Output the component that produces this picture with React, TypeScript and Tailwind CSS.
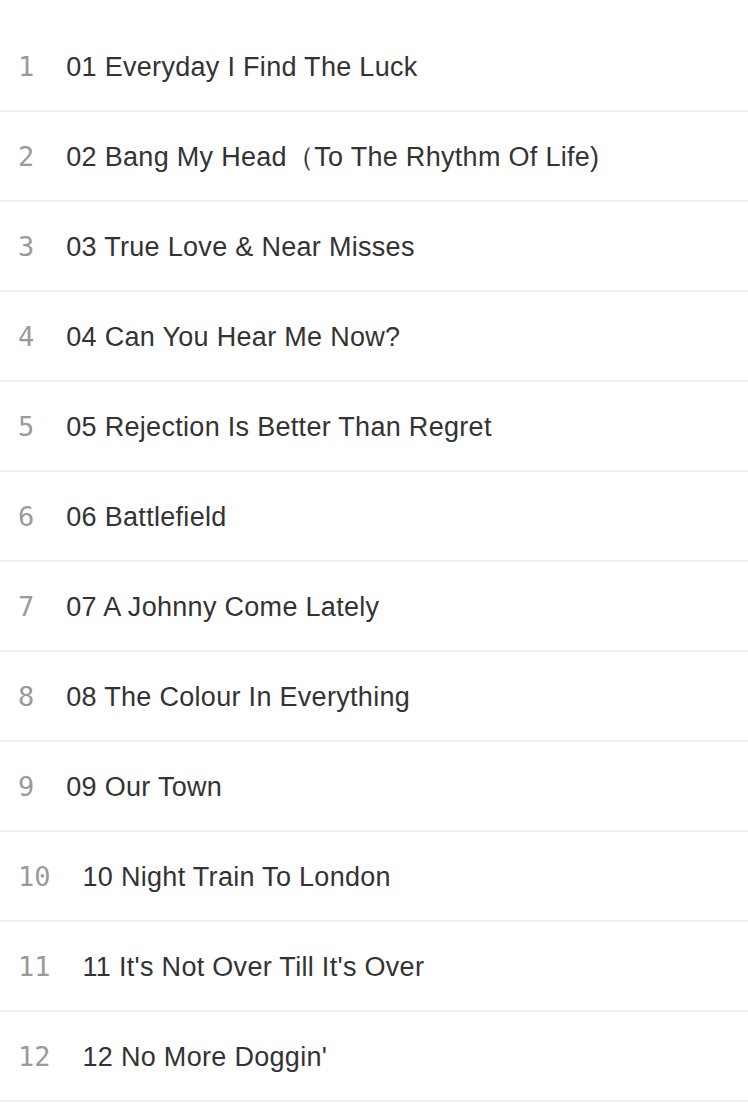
const tracks = [
  '01 Everyday I Find The Luck',
  '02 Bang My Head（To The Rhythm Of Life)',
  '03 True Love & Near Misses',
  '04 Can You Hear Me Now?',
  '05 Rejection Is Better Than Regret',
  '06 Battlefield',
  '07 A Johnny Come Lately',
  '08 The Colour In Everything',
  '09 Our Town',
  '10 Night Train To London',
  "11 It's Not Over Till It's Over",
  "12 No More Doggin'",
];

export default function App() {
  return (
    <div className="min-h-[1104px] bg-white pt-[22px]">
      <ul>
        {tracks.map((title, i) => (
          <li
            key={i}
            className="flex h-[90px] items-center border-b-2 border-[#f0f0f0] pt-[2px] pl-[18px]"
          >
            <span className="mr-[32px] font-['DejaVu_Sans_Mono',monospace] text-[27px] font-light text-[#9a9a9a]">
              {i + 1}
            </span>
            <span className="font-['Liberation_Sans',sans-serif] text-[27px] tracking-[0.3px] text-[#333333]">
              {title}
            </span>
          </li>
        ))}
      </ul>
    </div>
  );
}
